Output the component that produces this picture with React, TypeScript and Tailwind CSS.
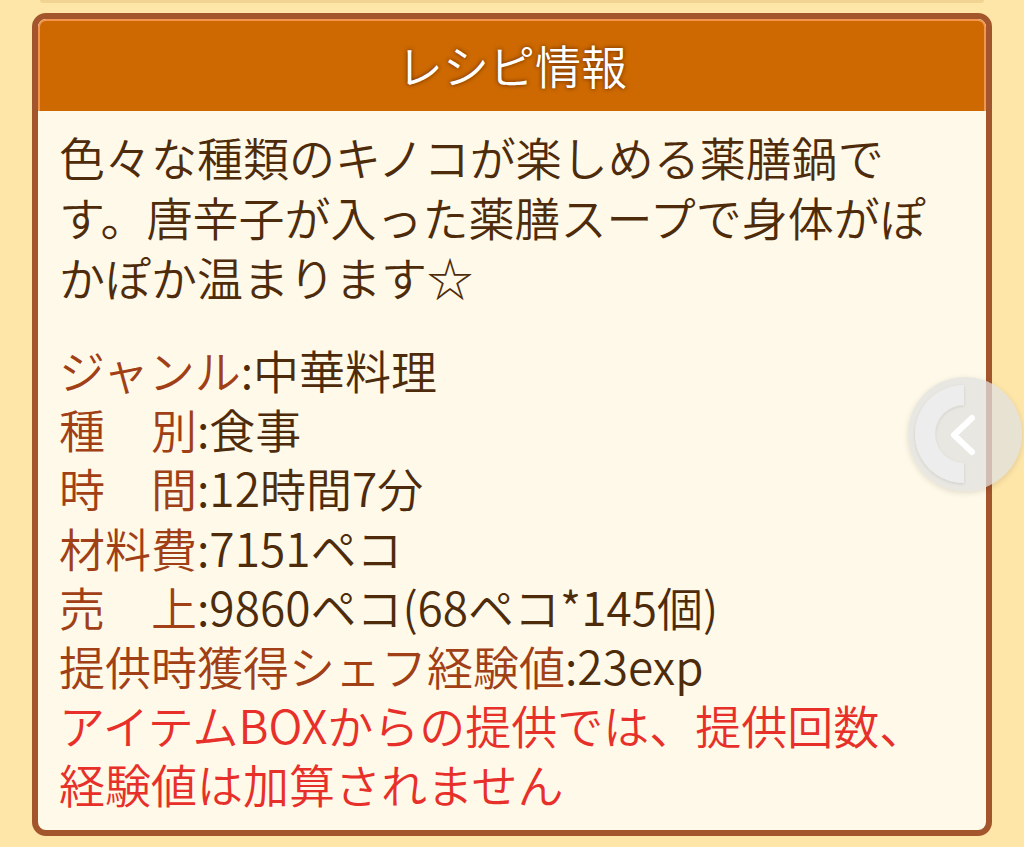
import React from "react";

const font = { fontFamily: '"Noto Sans CJK JP", "Noto Sans", sans-serif' };

function Row({ label, value }: { label: string; value: string }) {
  return (
    <div>
      <span className="text-[#a13f16]">{label}</span>
      <span className="text-[#4e2c0b]">{value}</span>
    </div>
  );
}

export default function App() {
  return (
    <div
      className="relative w-[1024px] h-[847px] overflow-hidden bg-[#fee5a8] font-[350]"
      style={font}
    >
      <div className="mx-[40px] h-[3px] rounded-b-[3px] bg-[#f1d494]" />
      <div className="mx-[32px] mt-[10px] rounded-[14px] border-[6px] border-[#a3552c] bg-[#fef9e8] overflow-hidden">
        <div className="h-[92px] flex items-center justify-center rounded-t-[8px] border-t-[2px] border-x-[2px] border-[#f2954f] bg-[#cd6900]">
          <h1 className="text-white text-[46px] leading-none [text-shadow:0_0_4px_rgba(90,35,0,0.95)] pb-[4px]">
            レシピ情報
          </h1>
        </div>
        <div className="pl-[21px] pr-[21px] pt-[15px] pb-[16px] text-[46px]">
          <p className="leading-[60px] text-[#4e2c0b]">
            色々な種類のキノコが楽しめる薬膳鍋です。唐辛子が入った薬膳スープで身体がぽかぽか温まります☆
          </p>
          <div className="mt-[34px] leading-[59.2px]">
            <Row label="ジャンル" value=":中華料理" />
            <Row label="種　別" value=":食事" />
            <Row label="時　間" value=":12時間7分" />
            <Row label="材料費" value=":7151ペコ" />
            <Row label="売　上" value=":9860ペコ(68ペコ*145個)" />
            <Row label="提供時獲得シェフ経験値" value=":23exp" />
            <p className="text-[#e8302a]">
              アイテムBOXからの提供では、提供回数、経験値は加算されません
            </p>
          </div>
        </div>
      </div>

      <button
        aria-label="前へ"
        className="absolute left-[908px] top-[377px] w-[114px] h-[114px] rounded-full bg-[rgba(224,224,224,0.75)] shadow-[0_2px_6px_rgba(0,0,0,0.12)] flex items-center justify-center"
      >
        <svg width="114" height="114" viewBox="0 0 114 114">
          <defs>
            <filter id="sh" x="-20%" y="-20%" width="140%" height="140%">
              <feDropShadow dx="0" dy="1" stdDeviation="1.5" floodColor="#000" floodOpacity="0.12" />
            </filter>
          </defs>
          <path
            d="M56 8 A49 49 0 0 0 56 106 L56 86 A29 29 0 0 1 56 28 Z"
            fill="#ededed"
            filter="url(#sh)"
          />
          <polyline
            points="64,41 46,58 64,75"
            fill="none"
            stroke="#ffffff"
            strokeWidth="6"
            strokeLinecap="round"
            strokeLinejoin="round"
          />
        </svg>
      </button>
    </div>
  );
}
